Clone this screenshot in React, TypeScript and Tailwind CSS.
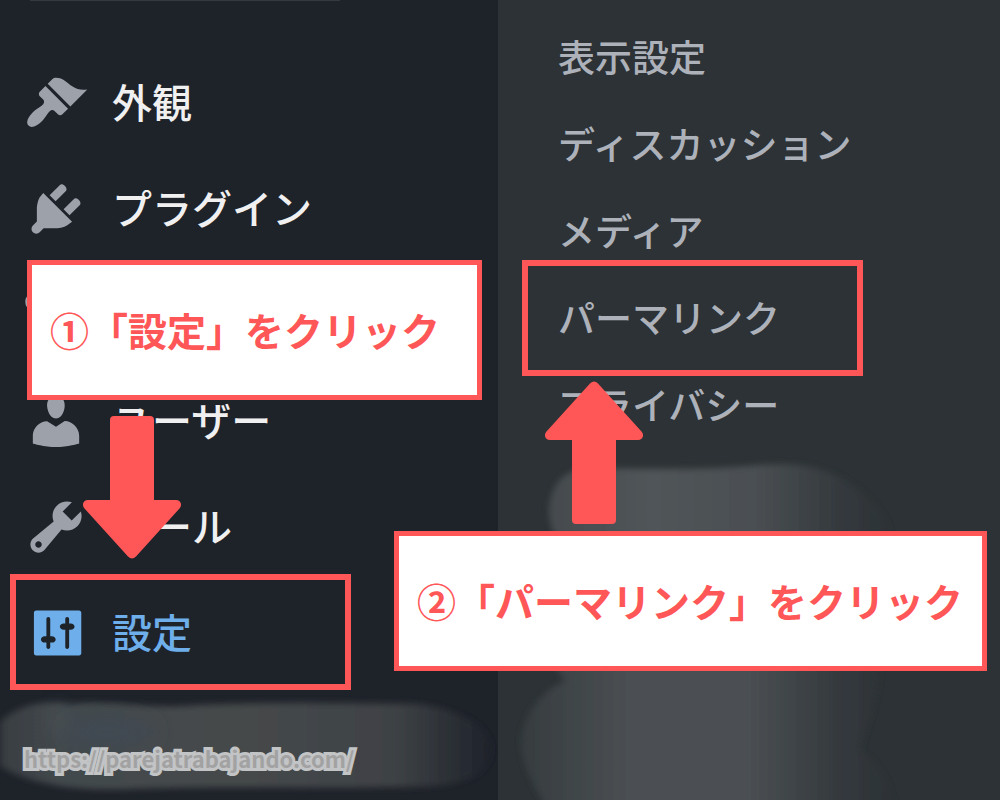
const MENU = [
  {
    label: '外観',
    icon: 'M14.48 11.06L7.41 3.99l1.5-1.5c.5-.56 2.3-.47 3.51.32 1.21.8 1.43 1.28 2.91 2.1 1.18.64 2.45 1.26 4.45.85zm-.71.71L6.7 4.7 4.93 6.47c-.39.39-.39 1.02 0 1.41l1.06 1.06c.39.39.39 1.03 0 1.42-.6.6-1.43 1.11-2.21 1.69-.35.26-.7.53-1.01.84C1.43 14.23.4 16.08 1.4 17.07c.99 1 2.84-.03 4.18-1.36.31-.31.58-.66.85-1.02.57-.78 1.08-1.61 1.69-2.21.39-.39 1.02-.39 1.41 0l1.06 1.06c.39.39 1.02.39 1.41 0z',
  },
  {
    label: 'プラグイン',
    icon: 'M13.11 4.36L9.87 7.6 8 5.73l3.24-3.24c.35-.34 1.05-.2 1.56.32.52.51.66 1.21.31 1.55zm-8 1.77l.91-1.12 9.01 9.01-1.19.84c-.71.71-2.63 1.16-3.82 1.16H6.14L4.9 17.26c-.59.59-1.54.59-2.12 0-.59-.58-.59-1.53 0-2.12l1.24-1.24v-3.88c0-1.13.4-3.19 1.09-3.89zm7.26 3.97l3.24-3.24c.34-.35 1.04-.21 1.55.31.52.51.66 1.21.31 1.55l-3.24 3.25z',
  },
  {
    label: '',
    icon: 'M2.6 3.2a2.2 2.7 0 1 0 0 5.4a2.2 2.7 0 1 0 0-5.4z',
  },
  {
    label: 'ユーザー',
    icon: 'M10 9.25c-2.27 0-2.73-3.44-2.73-3.44C7 4.02 7.82 2 9.97 2c2.16 0 2.98 2.02 2.71 3.81 0 0-.41 3.44-2.68 3.44zm0 2.57L12.72 10c2.39 0 4.52 2.33 4.52 4.53v2.49s-3.65 1.13-7.24 1.13c-3.65 0-7.24-1.13-7.24-1.13v-2.49c0-2.25 1.94-4.48 4.47-4.48z',
  },
  {
    label: 'ツール',
    icon: 'M16.68 9.77c-1.34 1.34-3.3 1.67-4.95.99l-5.41 6.52c-.99.99-2.59.99-3.58 0s-.99-2.59 0-3.57l6.52-5.42c-.68-1.65-.35-3.61.99-4.95 1.28-1.28 3.12-1.62 4.72-1.06l-2.89 2.89 2.82 2.82 2.86-2.87c.53 1.58.18 3.39-1.08 4.65zM3.81 16.21c.4.39 1.04.39 1.43 0 .4-.4.4-1.04 0-1.43-.39-.4-1.03-.4-1.43 0-.39.39-.39 1.03 0 1.43z',
  },
  {
    label: '設定',
    active: true,
    icon: 'M17.9 16.3V3.7c0-.4-.3-.7-.7-.7H3.8c-.4 0-.7.3-.7.7v12.6c0 .4.3.7.7.7h13.4c.4 0 .7-.3.7-.7zM8.2 11h.5c.7 0 1.2.45 1.2 1s-.5 1-1.2 1h-.5v1.4c0 .3-.25.6-.6.6s-.6-.3-.6-.6V13h-.5c-.7 0-1.2-.45-1.2-1s.5-1 1.200-1h.5V5.600c0-.3.25-.6.6-.6s.6.3.6.6V11zM12.900 9h-.5c-.7 0-1.200-.45-1.200-1s.5-1 1.200-1h.5V5.600c0-.3.25-.6.6-.6s.6.3.6.6V7h.5c.7 0 1.200.45 1.200 1s-.5 1-1.200 1h-.5v5.400c0 .3-.25.6-.6.6s-.6-.3-.6-.6V9z',
  },
];

const SUBMENU = [
  { label: '表示設定' },
  { label: 'ディスカッション' },
  { label: 'メディア' },
  { label: 'パーマリンク', marked: true },
  { label: 'プライバシー' },
];

const calloutClass =
  'flex h-[140px] items-center whitespace-nowrap border-[5px] border-[#ff5757] bg-white px-[18px] pb-0.5 text-[39px] font-bold leading-none text-[#ff5757]';

function Arrow({ className }: { className: string }) {
  return (
    <svg viewBox="0 0 98 143" className={`h-[143px] w-[98px] fill-[#ff5757] ${className}`} aria-hidden="true">
      <path d="M31 0h36q4 0 4 4v80h22c5 0 6.500 5 3.500 8.500L53 140.500q-4 4-8 0L1.500 92.500C-1.500 89 0 84 5 84h22V4q0-4 4-4z" />
    </svg>
  );
}

// brushed-out menu entries at the bottom of both columns
function Smudges() {
  return (
    <svg viewBox="0 0 1000 800" className="pointer-events-none absolute inset-0 h-full w-full" aria-hidden="true">
      <defs>
        <filter id="soft" x="-10%" y="-10%" width="120%" height="120%">
          <feGaussianBlur stdDeviation="3" />
        </filter>
        <filter id="softer" x="-50%" y="-80%" width="200%" height="260%">
          <feGaussianBlur stdDeviation="10" />
        </filter>
        <linearGradient id="left">
          <stop offset="0" stopColor="#383d41" />
          <stop offset="0.12" stopColor="#43484d" />
          <stop offset="0.5" stopColor="#45484a" />
          <stop offset="0.8" stopColor="#3e4245" />
          <stop offset="1" stopColor="#1e222a" />
        </linearGradient>
        <linearGradient id="top">
          <stop offset="0" stopColor="#454b4e" />
          <stop offset="0.3" stopColor="#505558" />
          <stop offset="0.6" stopColor="#4a4f52" />
          <stop offset="0.85" stopColor="#34393d" />
          <stop offset="1" stopColor="#2c3235" />
        </linearGradient>
        <linearGradient id="bottom">
          <stop offset="0" stopColor="#363c3f" />
          <stop offset="0.3" stopColor="#4b5053" />
          <stop offset="0.6" stopColor="#4b5053" />
          <stop offset="0.85" stopColor="#34393d" />
          <stop offset="1" stopColor="#2c3235" />
        </linearGradient>
      </defs>
      <path d="M30 -1h310v2H30z" fill="#34393d" />
      <path
        d="M0 722C18 704 45 700 70 704C110 700 140 708 180 706C260 701 340 703 420 704C465 710 492 730 492 750C490 774 465 787 415 787C310 789 220 786 130 789C70 792 25 782 0 766z"
        fill="url(#left)"
        filter="url(#soft)"
      />
      <ellipse cx="110" cy="732" rx="45" ry="14" fill="#3f4853" filter="url(#softer)" />
      <ellipse cx="57" cy="722" rx="8" ry="14" fill="#505458" opacity="0.7" filter="url(#softer)" />
      <path
        d="M549 508C551 484 565 468 590 468C660 469 710 470 760 465C815 460 850 476 875 505C888 520 892 532 892 550H565C554 540 548 522 549 508z"
        fill="url(#top)"
        filter="url(#soft)"
      />
      <path
        d="M550 660H880C880 700 865 730 860 750C875 760 890 780 895 810H548C530 780 517 755 522 732C529 704 548 688 565 681z"
        fill="url(#bottom)"
        filter="url(#soft)"
      />
    </svg>
  );
}

export default function App() {
  return (
    <main className="relative grid min-h-screen grid-cols-[498fr_502fr] overflow-hidden bg-[#2c3235] font-['Noto_Sans_CJK_JP','Noto_Sans',sans-serif]">
      <div className="bg-[#1e2229] pt-[50px]">
        <nav aria-label="メニュー">
          <ul>
            {MENU.map((item) => (
              <li key={item.icon} className={`relative z-10 ${item.active ? 'text-[#6eaeea]' : 'text-[#f0f0f1]'}`}>
                <a href="#" className="flex h-[106px] items-center gap-6 pl-6 text-[40px] font-medium leading-none">
                  <svg
                    viewBox="0 0 20 20"
                    className={`size-16 shrink-0 ${item.active ? 'fill-[#6eaeea]' : 'fill-[#9ca1aa]'}`}
                    aria-hidden="true"
                  >
                    <path fillRule="evenodd" d={item.icon} />
                  </svg>
                  <span className="pb-1">{item.label}</span>
                </a>
                {item.active && (
                  <div className="pointer-events-none absolute -top-1.5 left-2.5 h-[116px] w-[341px] border-[6px] border-[#ff5757]" />
                )}
              </li>
            ))}
          </ul>
        </nav>
        <a
          href="#"
          className="relative z-10 mt-14 ml-6 inline-block text-[22px] font-bold leading-8 text-[#a2a2a2] [-webkit-text-stroke:6px_#c2c4c6] [paint-order:stroke_fill]"
        >
          https://parejatrabajando.com/
        </a>
      </div>

      <nav aria-label="設定" className="pt-[13px]">
        <ul>
          {SUBMENU.map((item) => (
            <li key={item.label} className="relative z-10">
              <a href="#" className="flex h-[87px] items-center pl-[60px] text-[37px] font-medium leading-none text-[#adb1ba]">
                {item.label}
              </a>
              {item.marked && (
                <div className="pointer-events-none absolute -top-3.5 left-6 h-[116px] w-[341px] border-[6px] border-[#ff5757]" />
              )}
            </li>
          ))}
        </ul>
      </nav>

      <Smudges />

      {/* step notes lie over the menus */}
      <div className="pointer-events-none absolute left-[27px] top-[260px] z-20 flex w-[455px] flex-col gap-4">
        <p className={calloutClass}>①「設定」をクリック</p>
        <Arrow className="ml-14" />
      </div>
      <div className="pointer-events-none absolute left-[394px] top-[381px] z-20 flex w-[593px] flex-col gap-[7px]">
        <Arrow className="ml-[151px] rotate-180" />
        <p className={calloutClass}>②「パーマリンク」をクリック</p>
      </div>
    </main>
  );
}
